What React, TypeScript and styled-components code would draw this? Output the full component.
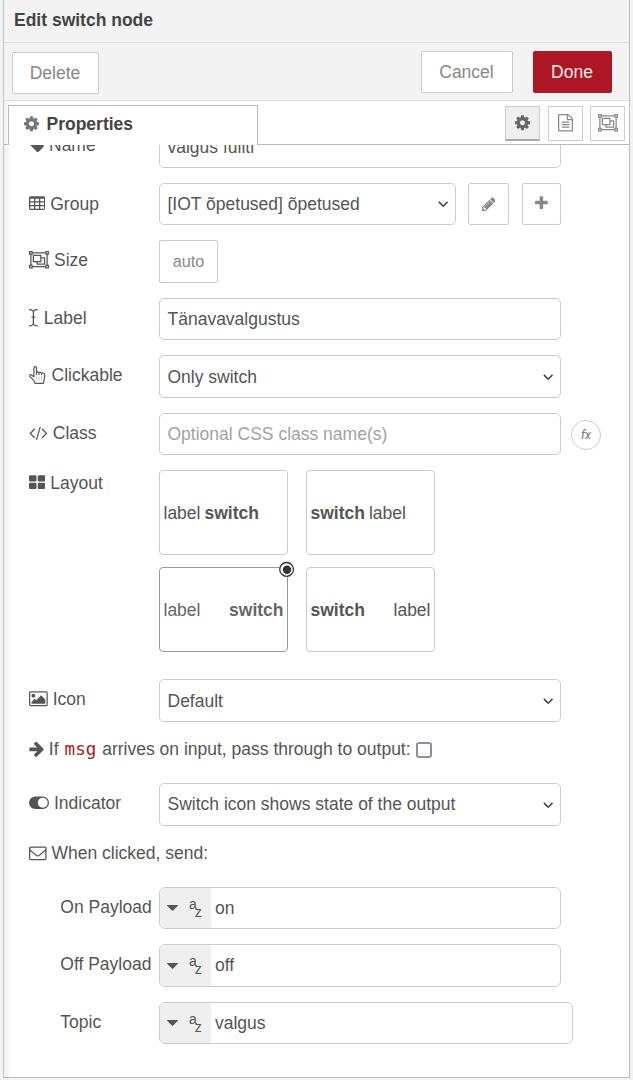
import React from "react";
import styled, { createGlobalStyle } from "styled-components";

const GlobalStyle = createGlobalStyle`
  *, *::before, *::after { box-sizing: border-box; }
  html, body { margin: 0; padding: 0; }
  body {
    background: #f3f3f3;
    color: #555;
    font: 17.5px/25px "Liberation Sans", Arial, sans-serif;
  }
`;

type GlyphDef = { x: number; w: number; d: string };

const GLYPHS: Record<string, GlyphDef> = {
  cog: {
    x: 128,
    w: 1536,
    d: "M1152 896q0-106-75-181t-181-75-181 75-75 181 75 181 181 75 181-75 75-181zm512-109v222q0 12-8 23t-20 13l-185 28q-19 54-39 91 35 50 107 138 10 12 10 25t-9 23q-27 37-99 108t-94 71q-12 0-26-9l-138-108q-44 23-91 38-16 136-29 186-7 28-36 28h-222q-14 0-24.5-8.5t-11.5-21.5l-28-184q-49-16-90-37l-141 107q-10 9-25 9-14 0-25-11-126-114-165-168-7-10-7-23 0-12 8-23 15-21 51-66.5t54-70.5q-27-50-41-99l-183-27q-13-2-21-12.5t-8-23.5v-222q0-12 8-23t19-13l186-28q14-46 39-92-40-57-107-138-10-12-10-24 0-10 9-23 26-36 98.5-107.5t94.5-71.5q13 0 26 10l138 107q44-23 91-38 16-136 29-186 7-28 36-28h222q14 0 24.5 8.5t11.5 21.5l28 184q49 16 90 37l142-107q9-9 24-9 13 0 25 10 129 119 165 170 7 8 7 22 0 12-8 23-15 21-51 66.5t-54 70.5q26 50 41 98l183 28q13 2 21 12.5t8 23.5z",
  },
  file: {
    x: 128,
    w: 1536,
    d: "M1596 380q28 28 48 76t20 88v1152q0 40-28 68t-68 28h-1344q-40 0-68-28t-28-68v-1600q0-40 28-68t68-28h896q40 0 88 20t76 48zm-444-244v376h376q-10-29-22-41l-313-313q-12-12-41-22zm384 1528v-1024h-416q-40 0-68-28t-28-68v-416h-768v1536h1280zm-1024-864q0-14 9-23t23-9h704q14 0 23 9t9 23v64q0 14-9 23t-23 9h-704q-14 0-23-9t-9-23v-64zm736 224q14 0 23 9t9 23v64q0 14-9 23t-23 9h-704q-14 0-23-9t-9-23v-64q0-14 9-23t23-9h704zm0 256q14 0 23 9t9 23v64q0 14-9 23t-23 9h-704q-14 0-23-9t-9-23v-64q0-14 9-23t23-9h704z",
  },
  group: {
    x: 0,
    w: 2048,
    d: "M2048 384h-128v1024h128v384h-384v-128h-1280v128h-384v-384h128v-1024h-128v-384h384v128h1280v-128h384v384zM1792 128v128h128v-128zM128 128v128h128v-128zM256 1664v-128h-128v128zM1664 1536v-128h128v-1024h-128v-128h-1280v128h-128v1024h128v128zM1920 1664v-128h-128v128zM1280 640h384v768h-896v-256h-384v-768h896zM512 1024h640v-512h-640zM1536 1280v-512h-256v384h-384v128z",
  },
  table: {
    x: 64,
    w: 1664,
    d: "M576 1376v-192q0-14-9-23t-23-9h-320q-14 0-23 9t-9 23v192q0 14 9 23t23 9h320q14 0 23-9t9-23zm0-384v-192q0-14-9-23t-23-9h-320q-14 0-23 9t-9 23v192q0 14 9 23t23 9h320q14 0 23-9t9-23zm512 384v-192q0-14-9-23t-23-9h-320q-14 0-23 9t-9 23v192q0 14 9 23t23 9h320q14 0 23-9t9-23zm-512-768v-192q0-14-9-23t-23-9h-320q-14 0-23 9t-9 23v192q0 14 9 23t23 9h320q14 0 23-9t9-23zm512 384v-192q0-14-9-23t-23-9h-320q-14 0-23 9t-9 23v192q0 14 9 23t23 9h320q14 0 23-9t9-23zm512 384v-192q0-14-9-23t-23-9h-320q-14 0-23 9t-9 23v192q0 14 9 23t23 9h320q14 0 23-9t9-23zm-512-768v-192q0-14-9-23t-23-9h-320q-14 0-23 9t-9 23v192q0 14 9 23t23 9h320q14 0 23-9t9-23zm512 384v-192q0-14-9-23t-23-9h-320q-14 0-23 9t-9 23v192q0 14 9 23t23 9h320q14 0 23-9t9-23zm0-384v-192q0-14-9-23t-23-9h-320q-14 0-23 9t-9 23v192q0 14 9 23t23 9h320q14 0 23-9t9-23zm128-320v1088q0 66-47 113t-113 47h-1344q-66 0-113-47t-47-113v-1088q0-66 47-113t113-47h1344q66 0 113 47t47 113z",
  },
  cursor: {
    x: 0,
    w: 896,
    d: "M832 128q-320 0-320 224v416h128v128h-128v544q0 224 320 224h64v128h-64q-272 0-384-146-112 146-384 146h-64v-128h64q320 0 320-224v-544h-128v-128h128v-416q0-224-320-224h-64v-128h64q272 0 384 146 112-146 384-146h64v128h-64z",
  },
  code: {
    x: 64,
    w: 1920,
    d: "M681 1399l-50 50q-10 10-23 10t-23-10l-466-466q-10-10-10-23t10-23l466-466q10-10 23-10t23 10l50 50q10 10 10 23t-10 23l-393 393 393 393q10 10 10 23t-10 23zm591-1067l-373 1291q-4 13-15.5 19.5t-23.5 2.5l-62-17q-13-4-19.5-15.5t-2.5-24.5l373-1291q4-13 15.5-19.5t23.5-2.5l62 17q13 4 19.5 15.5t2.5 24.5zm657 651l-466 466q-10 10-23 10t-23-10l-50-50q-10-10-10-23t10-23l393-393-393-393q-10-10-10-23t10-23l50-50q10-10 23-10t23 10l466 466q10 10 10 23t-10 23z",
  },
  large: {
    x: 64,
    w: 1664,
    d: "M832 1024v384q0 52-38 90t-90 38h-512q-52 0-90-38t-38-90v-384q0-52 38-90t90-38h512q52 0 90 38t38 90zm0-768v384q0 52-38 90t-90 38h-512q-52 0-90-38t-38-90v-384q0-52 38-90t90-38h512q52 0 90 38t38 90zm896 768v384q0 52-38 90t-90 38h-512q-52 0-90-38t-38-90v-384q0-52 38-90t90-38h512q52 0 90 38t38 90zm0-768v384q0 52-38 90t-90 38h-512q-52 0-90-38t-38-90v-384q0-52 38-90t90-38h512q52 0 90 38t38 90z",
  },
  pencil: {
    x: 128,
    w: 1536,
    d: "M491 1536l91-91-235-235-91 91v107h128v128h107zm523-928q0-22-22-22-10 0-17 7l-542 542q-7 7-7 17 0 22 22 22 10 0 17-7l542-542q7-7 7-17zm-54-192l416 416-832 832h-416v-416zm683 96q0 53-37 90l-166 166-416-416 166-165q36-38 90-38 53 0 91 38l235 234q37 39 37 91z",
  },
  plus: {
    x: 192,
    w: 1408,
    d: "M1600 736v192q0 40-28 68t-68 28h-416v416q0 40-28 68t-68 28h-192q-40 0-68-28t-28-68v-416h-416q-40 0-68-28t-28-68v-192q0-40 28-68t68-28h416v-416q0-40 28-68t68-28h192q40 0 68 28t28 68v416h416q40 0 68 28t28 68z",
  },
  picture: {
    x: -64,
    w: 1920,
    d: "M576 576q0 80-56 136t-136 56-136-56-56-136 56-136 136-56 136 56 56 136zm1024 384v448h-1408v-192l320-320 160 160 512-512zm96-704h-1600q-13 0-22.5 9.5t-9.5 22.5v1216q0 13 9.5 22.5t22.5 9.5h1600q13 0 22.5-9.5t9.5-22.5v-1216q0-13-9.5-22.5t-22.5-9.5zm160 32v1216q0 66-47 113t-113 47h-1600q-66 0-113-47t-47-113v-1216q0-66 47-113t113-47h1600q66 0 113 47t47 113z",
  },
  arrow: {
    x: 96,
    w: 1536,
    d: "M1600 960q0 54-37 91l-651 651q-39 37-91 37-51 0-90-37l-75-75q-38-38-38-91t38-91l293-293h-704q-52 0-84.5-37.5t-32.5-90.5v-128q0-53 32.5-90.5t84.5-37.5h704l-293-294q-38-36-38-90t38-90l75-75q38-38 90-38 53 0 91 38l651 651q37 35 37 90z",
  },
  toggle: {
    x: 0,
    w: 2048,
    d: "M640 256h768a640 640 0 0 1 0 1280h-768a640 640 0 0 1 0-1280zM1408 1408a512 512 0 0 0 0-1024a512 512 0 0 0 0 1024z",
  },
  envelope: {
    x: 0,
    w: 1792,
    d: "M1664 1504v-768q-32 36-69 66-268 206-426 338-51 43-83 67t-86.5 48.5-102.5 24.5h-2q-48 0-102.5-24.5t-86.5-48.5-83-67q-158-132-426-338-37-30-69-66v768q0 13 9.5 22.5t22.5 9.5h1472q13 0 22.5-9.5t9.5-22.5zm0-1051v-24.5l-.5-13-3-12.5-5.5-9-9-7.5-14-2.5h-1472q-13 0-22.5 9.5t-9.5 22.5q0 168 147 284 193 152 401 317 6 5 35 29.5t46 37.5 44.5 31.5 50.5 27.5 43 9h2q20 0 43-9t50.5-27.5 44.5-31.5 46-37.5 35-29.5q208-165 401-317 54-43 100.5-115.5t46.5-131.5zm128-37v1088q0 66-47 113t-113 47h-1472q-66 0-113-47t-47-113v-1088q0-66 47-113t113-47h1472q66 0 113 47t47 113z",
  },
  tag: {
    x: 128,
    w: 1536,
    d: "M576 448q0-53-37.5-90.5t-90.5-37.5-90.5 37.5-37.5 90.5 37.5 90.5 90.5 37.5 90.5-37.5 37.5-90.5zm1067 576q0 53-37 90l-491 492q-39 37-91 37-53 0-90-37l-715-716q-38-37-64.5-101t-26.5-117v-416q0-52 38-90t90-38h416q53 0 117 26.5t102 64.5l715 714q37 39 37 91z",
  },
};

const GlyphSvg = styled.svg<{ $lift: number }>`
  flex: none;
  display: block;
  fill: currentColor;
  margin-bottom: ${(p) => p.$lift}px;
`;

function Glyph({ name, size = 17.5, lift = 0 }: { name: string; size?: number; lift?: number }) {
  const g = GLYPHS[name];
  return (
    <GlyphSvg
      $lift={lift}
      width={(g.w / 1792) * size}
      height={size}
      viewBox={`${g.x} 0 ${g.w} 1792`}
    >
      <path d={g.d} />
    </GlyphSvg>
  );
}

const Tray = styled.main`
  width: 627px;
  height: 1078px;
  margin-left: 3px;
  display: flex;
  flex-direction: column;
  background: #fff;
  border: 1px solid #bbb;
  border-top: 0;
  border-left-color: #c4c4c4;
  overflow: hidden;
`;

const Header = styled.header`
  flex: none;
  height: 43px;
  padding: 8px 10px 0;
  background: #f3f3f3;
  border-bottom: 1px solid #ddd;
  color: #444;
  font-weight: bold;
`;

const Toolbar = styled.div`
  flex: none;
  height: 58px;
  padding: 8px 17px 0 8px;
  display: flex;
  align-items: flex-start;
  gap: 20px;
  background: #f3f3f3;
  border-bottom: 1px solid #ddd;
`;

const Button = styled.button<{ $w: number; $primary?: boolean; $left?: boolean }>`
  width: ${(p) => p.$w}px;
  height: 42px;
  margin: ${(p) => (p.$left ? "1px auto 0 0" : "0")};
  padding: 0 1px 0 0;
  font: inherit;
  color: ${(p) => (p.$primary ? "#eee" : "#888")};
  background: ${(p) => (p.$primary ? "#ad1625" : "#fff")};
  border: 1px solid ${(p) => (p.$primary ? "#ad1625" : "#ccc")};
  border-radius: 2px;
`;

const TabBar = styled.nav`
  flex: none;
  height: 44px;
  padding: 4px 4px 0 4px;
  display: flex;
  align-items: flex-start;
  box-shadow: inset 0 -1px #bbb, inset 8px 0 8px -8px rgba(0, 0, 0, 0.12);
`;

const Tab = styled.div`
  width: 250px;
  height: 40px;
  margin-right: auto;
  padding: 0 15px 2px;
  display: flex;
  align-items: center;
  gap: 7.5px;
  background: #fff;
  border: 1px solid #bbb;
  border-bottom: 0;
  color: #444;
  font-weight: bold;
  svg { color: #777; }
`;

const IconTabs = styled.div`
  display: flex;
  gap: 7px;
  padding-top: 1px;
`;

const IconTab = styled.div<{ $active?: boolean }>`
  width: 35px;
  height: 35px;
  display: flex;
  align-items: center;
  justify-content: center;
  padding-bottom: ${(p) => (p.$active ? 0 : 1)}px;
  color: ${(p) => (p.$active ? "#666" : "#888")};
  background: ${(p) => (p.$active ? "#efefef" : "#fff")};
  border: 1px solid #ccc;
  border-bottom: ${(p) => (p.$active ? "2px solid #aaa" : "1px solid #ccc")};
  &:nth-child(2) { margin-left: 1px; }
`;

const Content = styled.section`
  flex: 1;
  min-height: 0;
  overflow: hidden;
  padding-left: 25px;
  box-shadow: inset 8px 0 8px -8px rgba(0, 0, 0, 0.16);
`;

const Form = styled.form`
  margin-top: -19px;
  display: flex;
  flex-direction: column;
`;

const Row = styled.div<{ $h: number; $mb?: number }>`
  height: ${(p) => p.$h}px;
  margin-bottom: ${(p) => p.$mb ?? 15}px;
  display: flex;
  align-items: stretch;
`;

const Label = styled.label<{ $up?: number; $indent?: boolean; $top?: boolean; $gap?: number }>`
  width: 130px;
  height: ${(p) => (p.$top ? "26px" : "auto")};
  padding-left: ${(p) => (p.$indent ? 31.3 : 0)}px;
  padding-top: ${(p) => (p.$top ? 1 : 0)}px;
  padding-bottom: ${(p) => p.$up ?? 0}px;
  display: flex;
  align-items: center;
  gap: ${(p) => p.$gap ?? 5}px;
  flex: none;
  white-space: nowrap;
`;

const Field = styled.div<{ $w?: number; $muted?: boolean; $down?: number }>`
  width: ${(p) => p.$w ?? 402}px;
  padding: ${(p) => p.$down ?? 0}px 7px 0 7.5px;
  display: flex;
  align-items: center;
  justify-content: space-between;
  color: ${(p) => (p.$muted ? "#a2a2a2" : "#555")};
  border: 1px solid #ccc;
  border-radius: 5px;
  white-space: nowrap;
`;

const SmallButton = styled.div<{ $w: number; $ml?: number }>`
  width: ${(p) => p.$w}px;
  margin-left: ${(p) => p.$ml ?? 0}px;
  display: flex;
  align-items: center;
  justify-content: center;
  color: #888;
  font-size: 16.25px;
  border: 1px solid #ccc;
  border-radius: 2px;
`;

const FxButton = styled.div`
  width: 30px;
  height: 30px;
  margin: 7px 0 0 10px;
  display: flex;
  align-items: center;
  justify-content: center;
  border: 1px solid #ccc;
  border-radius: 50%;
  color: #777;
  font: italic 12.5px/16px Roboto, sans-serif;
`;

const LayoutGrid = styled.div`
  display: grid;
  grid-template-columns: 129px 129px;
  grid-auto-rows: 85px;
  gap: 12px 18px;
`;

const LayoutCard = styled.div<{ $spread?: boolean; $selected?: boolean }>`
  position: relative;
  padding: 2px 3.5px 0;
  display: flex;
  align-items: center;
  justify-content: ${(p) => (p.$spread ? "space-between" : "flex-start")};
  gap: 4px;
  color: ${(p) => (p.$selected ? "#666" : "#555")};
  border: 1px solid ${(p) => (p.$selected ? "#999" : "#ccc")};
  border-radius: 4px;
`;

const SelectedMark = styled.svg`
  position: absolute;
  top: -7px;
  right: -8px;
`;

const CheckLine = styled.div`
  height: 25px;
  margin-bottom: 21px;
  display: flex;
  align-items: center;
  white-space: pre;
`;

const Code = styled.code`
  margin: 0 6px 0 6px;
  color: #ad1625;
  font: 17.5px/25px "DejaVu Sans Mono", monospace;
`;

const CheckBox = styled.span`
  width: 16px;
  height: 16px;
  margin: 1px 0 0 5px;
  border: 2px solid #8f8f9d;
  border-radius: 3px;
`;

const TypedInput = styled.div<{ $w?: number }>`
  width: ${(p) => p.$w ?? 402}px;
  display: flex;
  align-items: center;
  border: 1px solid #ccc;
  border-radius: 6px;
  overflow: hidden;
`;

const TypeSelect = styled.div`
  width: 51px;
  height: 100%;
  margin-right: 4px;
  padding-left: 7px;
  display: flex;
  align-items: center;
  background: #efefef;
`;

const AzIcon = styled.span`
  margin-left: 11px;
  display: flex;
  font-size: 14px;
  line-height: 14px;
  span { height: 14px; margin-top: -1px; }
  span + span { margin: 7px 0 0 -2px; }
`;

function Chevron() {
  return (
    <svg width="10" height="8" viewBox="0 0 10 8" fill="none" stroke="#444" strokeWidth="1.6">
      <path d="M0.9 1.9L5.2 6.2L9.5 1.9" />
    </svg>
  );
}

function Caret() {
  return (
    <svg width="11" height="6" viewBox="0 0 11 6" fill="#555">
      <path d="M0.4 0h10.2q.5.3 0 .9L6.1 5.4q-.6.5-1.2 0L.4.9q-.5-.6 0-.9z" />
    </svg>
  );
}

function PointingHand() {
  return (
    <svg width="17" height="18" viewBox="0 0 17 18" fill="none" stroke="#555" strokeWidth="1.2" strokeLinejoin="round">
      <path d="M4.9 11.2V2.1Q4.9.7 6.2.7T7.5 2.1V6.2Q8.9 5.2 10 6.6Q11.5 5.7 12.5 7.2Q15.6 6.4 15.6 9.2V11Q15.6 12.2 15.1 13.7Q14.7 15 14.7 16.6Q14.6 17.3 13.9 17.3H6.7Q6 17.3 5.8 16.7Q5.6 15.3 4.5 14.2L1.1 10.9Q.2 9.8 1.1 9Q2.2 8.2 3.2 9.3L4.9 11.2" />
      <path d="M7.5 6v3M10 6.7v2.3M12.5 7.3v1.9" strokeWidth="1" />
      <path d="M7.5 10.5v3.6M10 10.5v3.6M12.5 10.5v3.6" strokeWidth="0.7" opacity="0.5" />
    </svg>
  );
}

function Typed({ value, w }: { value: string; w?: number }) {
  return (
    <TypedInput $w={w}>
      <TypeSelect>
        <Caret />
        <AzIcon>
          <span>a</span>
          <span>z</span>
        </AzIcon>
      </TypeSelect>
      {value}
    </TypedInput>
  );
}

export default function App() {
  return (
    <>
      <GlobalStyle />
      <Tray>
        <Header>Edit switch node</Header>
        <Toolbar>
          <Button $w={87} $left>Delete</Button>
          <Button $w={92}>Cancel</Button>
          <Button $w={79} $primary>Done</Button>
        </Toolbar>
        <TabBar>
          <Tab>
            <Glyph name="cog" lift={1} />
            Properties
          </Tab>
          <IconTabs>
            <IconTab $active><Glyph name="cog" /></IconTab>
            <IconTab><Glyph name="file" /></IconTab>
            <IconTab><Glyph name="group" /></IconTab>
          </IconTabs>
        </TabBar>
        <Content>
          <Form>
            <Row $h={42}>
              <Label $up={4}><Glyph name="tag" />Name</Label>
              <Field>valgus fuliti</Field>
            </Row>
            <Row $h={42}>
              <Label><Glyph name="table" />Group</Label>
              <Field $w={297}>[IOT õpetused] õpetused<Chevron /></Field>
              <SmallButton $w={41} $ml={12}><Glyph name="pencil" size={16.25} /></SmallButton>
              <SmallButton $w={39} $ml={13}><Glyph name="plus" size={16.25} lift={2} /></SmallButton>
            </Row>
            <Row $h={43}>
              <Label $up={3}><Glyph name="group" />Size</Label>
              <SmallButton $w={59}>auto</SmallButton>
            </Row>
            <Row $h={42}>
              <Label $up={2} $gap={6}><Glyph name="cursor" />Label</Label>
              <Field>Tänavavalgustus</Field>
            </Row>
            <Row $h={43}>
              <Label $up={3} $gap={5.5}><PointingHand />Clickable</Label>
              <Field $down={1}>Only switch<Chevron /></Field>
            </Row>
            <Row $h={42}>
              <Label $up={2}><Glyph name="code" />Class</Label>
              <Field $muted>Optional CSS class name(s)</Field>
              <FxButton>fx</FxButton>
            </Row>
            <Row $h={182} $mb={27}>
              <Label $top><Glyph name="large" lift={2} />Layout</Label>
              <LayoutGrid>
                <LayoutCard><span>label</span><b>switch</b></LayoutCard>
                <LayoutCard><b>switch</b><span>label</span></LayoutCard>
                <LayoutCard $spread $selected>
                  <span>label</span><b>switch</b>
                  <SelectedMark width="16" height="16" viewBox="0 0 16 16">
                    <circle cx="7.6" cy="8.4" r="6.9" fill="#fff" stroke="#333" strokeWidth="1.3" />
                    <circle cx="8" cy="8.8" r="4.2" fill="#333" />
                  </SelectedMark>
                </LayoutCard>
                <LayoutCard $spread><b>switch</b><span>label</span></LayoutCard>
              </LayoutGrid>
            </Row>
            <Row $h={43}>
              <Label $up={3}><Glyph name="picture" />Icon</Label>
              <Field $down={1}>Default<Chevron /></Field>
            </Row>
            <CheckLine>
              <Glyph name="arrow" lift={2} />
              {" If"}
              <Code>msg</Code>
              arrives on input, pass through to output:
              <CheckBox />
            </CheckLine>
            <Row $h={43}>
              <Label $up={3}><Glyph name="toggle" />Indicator</Label>
              <Field>Switch icon shows state of the output<Chevron /></Field>
            </Row>
            <Row $h={25} $mb={21}>
              <Label><Glyph name="envelope" lift={1.5} />When clicked, send:</Label>
            </Row>
            <Row $h={42}>
              <Label $indent $up={2}>On Payload</Label>
              <Typed value="on" />
            </Row>
            <Row $h={43}>
              <Label $indent $up={3}>Off Payload</Label>
              <Typed value="off" />
            </Row>
            <Row $h={42}>
              <Label $indent $up={2}>Topic</Label>
              <Typed value="valgus" w={414} />
            </Row>
          </Form>
        </Content>
      </Tray>
    </>
  );
}
